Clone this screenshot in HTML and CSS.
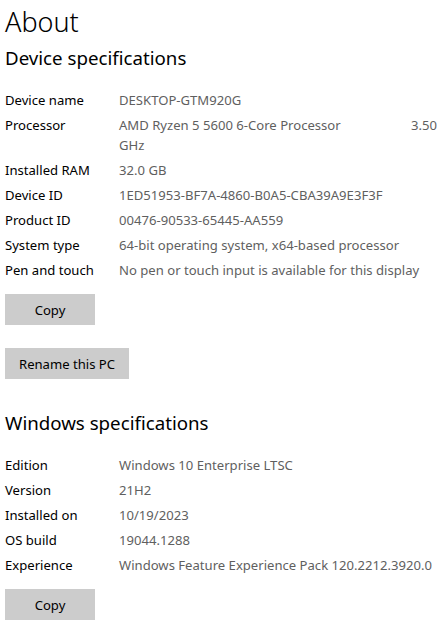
FILE: index.html
```html
<!DOCTYPE html>
<html lang="en">

<head>
  <meta charset="UTF-8" />
  <meta name="viewport" content="width=device-width, initial-scale=1.0" />
  <title>About</title>
  <link rel="stylesheet" href="styles.css">
</head>

<body>
  <div class="about">
    <h1>About</h1>

    <h2>Device specifications</h2>
    <div class="specs">
      <div class="row"><span class="label">Device name</span><span class="value">DESKTOP-GTM920G</span></div>
      <div class="row">
        <span class="label">Processor</span>
        <span class="value">
          <span class="proc-line"><span>AMD Ryzen 5 5600 6-Core Processor</span><span class="freq">3.50</span></span>
          GHz
        </span>
      </div>
      <div class="row"><span class="label">Installed RAM</span><span class="value">32.0 GB</span></div>
      <div class="row"><span class="label">Device ID</span><span class="value">1ED51953-BF7A-4860-B0A5-CBA39A9E3F3F</span></div>
      <div class="row"><span class="label">Product ID</span><span class="value">00476-90533-65445-AA559</span></div>
      <div class="row"><span class="label">System type</span><span class="value">64-bit operating system, x64-based processor</span></div>
      <div class="row"><span class="label">Pen and touch</span><span class="value">No pen or touch input is available for this display</span></div>
    </div>
    <button class="btn btn-copy">Copy</button>
    <button class="btn btn-rename">Rename this PC</button>

    <h2 class="win-title">Windows specifications</h2>
    <div class="specs">
      <div class="row"><span class="label">Edition</span><span class="value">Windows 10 Enterprise LTSC</span></div>
      <div class="row"><span class="label">Version</span><span class="value">21H2</span></div>
      <div class="row"><span class="label">Installed on</span><span class="value">10/19/2023</span></div>
      <div class="row"><span class="label">OS build</span><span class="value">19044.1288</span></div>
      <div class="row"><span class="label">Experience</span><span class="value">Windows Feature Experience Pack 120.2212.3920.0</span></div>
    </div>
    <button class="btn btn-copy2">Copy</button>
  </div>
</body>

</html>
```

FILE: styles.css
```css
body {
  margin: 0;
  background-color: #fff;
  color: #000;
  font-family: "Noto Sans", "Open Sans", sans-serif;
}

.about {
  padding: 0 5px;
}

h1 {
  margin: 4px 0 0;
  font-size: 27px;
  line-height: 36px;
  font-weight: 300;
}

h2 {
  margin: 4px 0 0;
  font-size: 18.7px;
  line-height: 28px;
  font-weight: 400;
}

.specs {
  margin-top: 18px;
}

.row {
  display: flex;
  font-size: 13.1px;
  line-height: 20px;
  margin-bottom: 5px;
}

.label {
  width: 114px;
  flex-shrink: 0;
}

.value {
  color: #5f5f5f;
  flex: 1;
  white-space: nowrap;
}

.proc-line {
  display: flex;
  justify-content: space-between;
  padding-right: 4px;
  white-space: normal;
}

.btn {
  display: block;
  height: 31px;
  padding: 0 14px;
  border: none;
  background-color: #ccc;
  color: #000;
  font-family: inherit;
  font-size: 13.1px;
}

.btn-copy {
  width: 90px;
  margin-top: 14px;
}

.btn-rename {
  margin-top: 23px;
}

.btn-copy2 {
  width: 90px;
  margin-top: 14px;
}

h2.win-title {
  margin-top: 30px;
}
```
